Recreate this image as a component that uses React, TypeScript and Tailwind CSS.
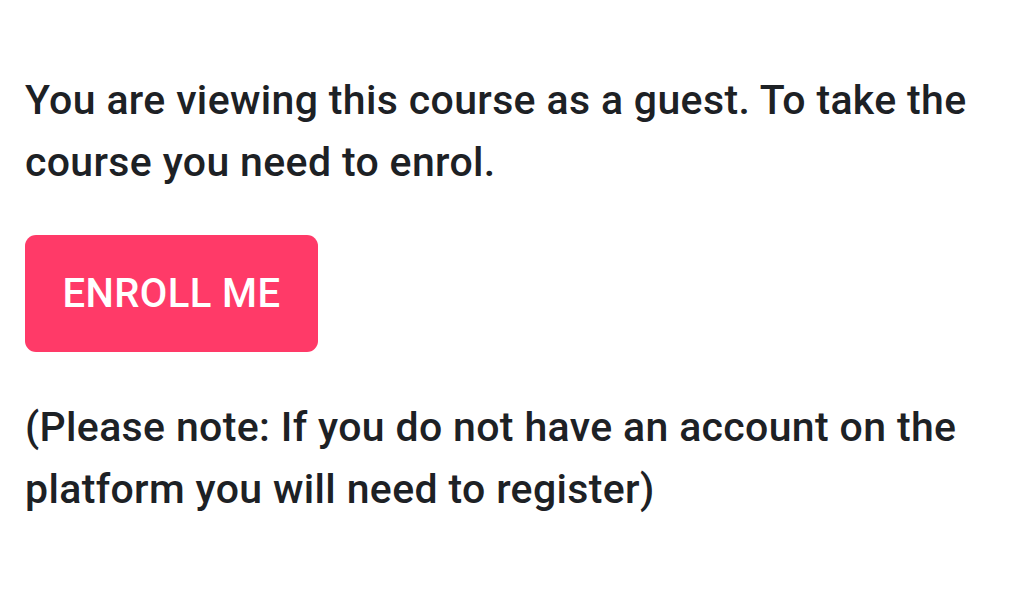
import React from 'react';

const App: React.FC = () => {
  return (
    <div className="min-h-screen w-full bg-white px-[25px] pt-[69px] text-[#1d2125] font-['Roboto',sans-serif]">
      <p className="text-[41px] leading-[62px] font-medium tracking-[0.35px] max-w-[975px]">
        You are viewing this course as a guest. To take the course you need to enrol.
      </p>

      <button className="mt-[42px] flex h-[117px] w-[293px] items-center justify-center rounded-[11px] bg-[#ff3a68] text-[40px] font-medium tracking-[0.4px] text-white">
        ENROLL ME
      </button>

      <p className="mt-[44px] text-[41px] leading-[62px] font-medium tracking-[0.35px] max-w-[975px]">
        (Please note: If you do not have an account on the platform you will need to register)
      </p>
    </div>
  );
};

export default App;
